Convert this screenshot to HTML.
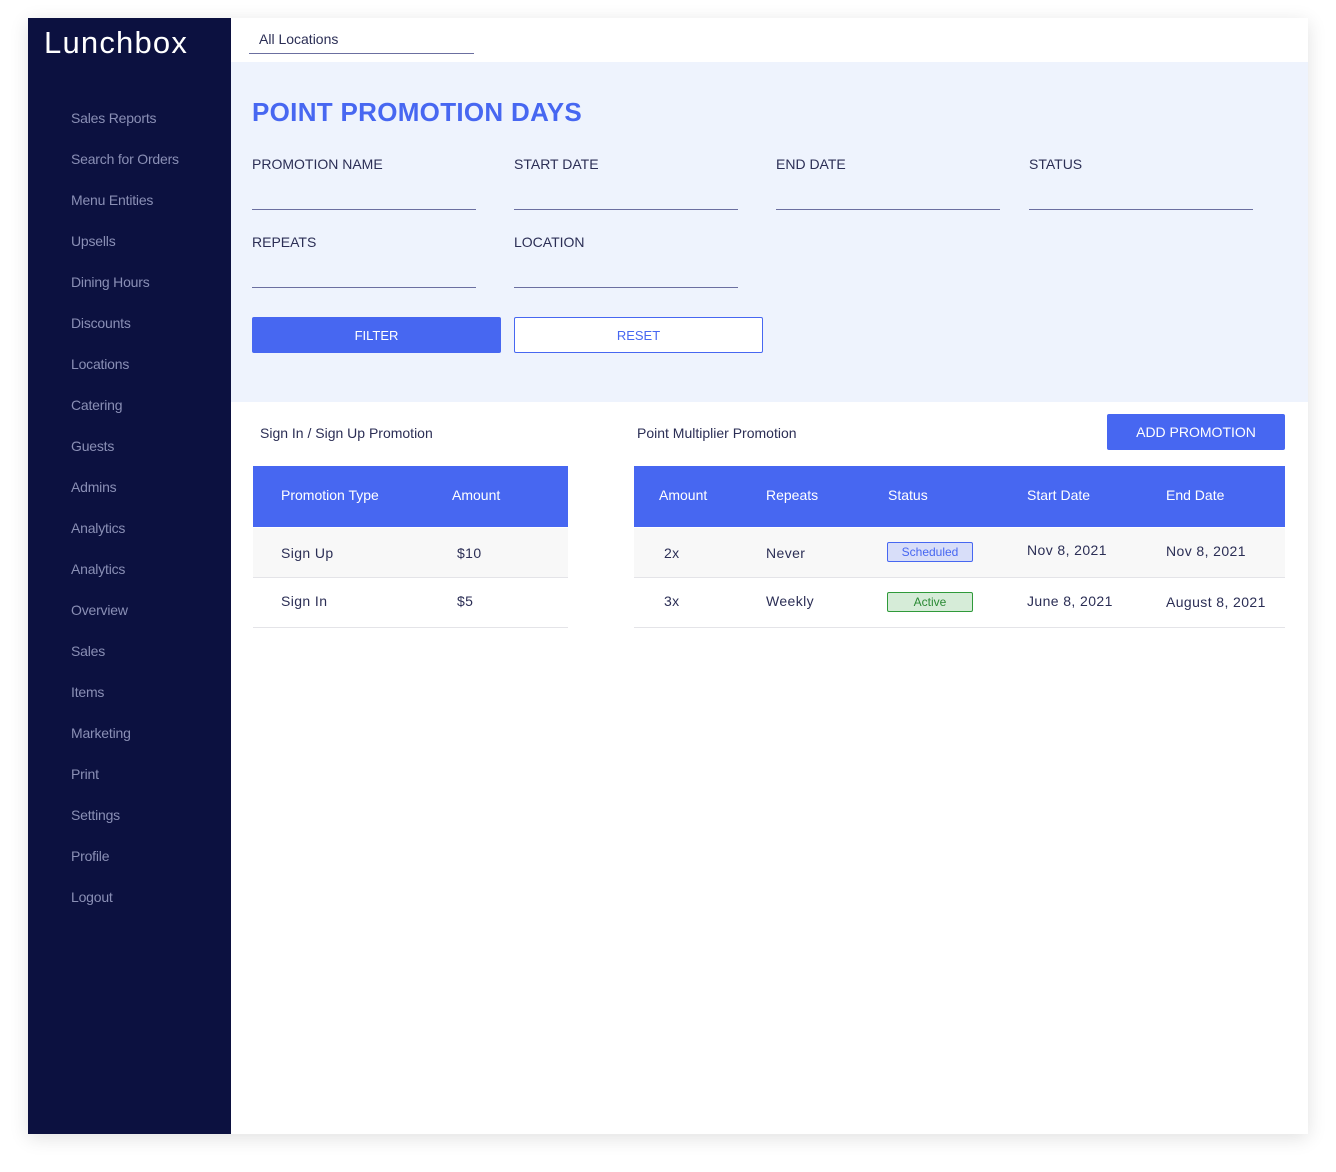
<!DOCTYPE html>
<html><head><meta charset="utf-8"><style>
*{margin:0;padding:0;box-sizing:border-box}
body{width:1336px;height:1172px;background:#fff;font-family:"Liberation Sans",sans-serif;position:relative;overflow:hidden;color:#2b2e55}
.card{position:absolute;left:28px;top:18px;width:1280px;height:1116px;background:#fff;box-shadow:0 4px 18px rgba(0,0,0,.12)}
.side{position:absolute;left:28px;top:18px;width:203px;height:1116px;background:#0c1140}
.logo{position:absolute;left:44px;top:25px;color:#fff;font-size:31px;letter-spacing:1.2px}
.nav{position:absolute;left:71px;color:#8a8fb5;font-size:14px;letter-spacing:-.2px}
.a{position:absolute}
.loc{left:249px;top:31px;width:225px;height:23px;border-bottom:1px solid #6b6fa0;font-size:14px;padding-left:10px;color:#2b2e55}
.filt{left:231px;top:62px;width:1077px;height:340px;background:#eef3fd}
h1{position:absolute;left:252px;top:97px;font-size:26px;color:#4767f1;font-weight:bold;letter-spacing:0.3px}
.lbl{position:absolute;font-size:14px;color:#2b2e55}
.ln{position:absolute;width:224px;height:1px;background:#6b6fa0}
.btn{position:absolute;height:36px;font-size:13px;display:flex;align-items:center;justify-content:center;border-radius:2px}
.th{position:absolute;background:#4767f1;height:61px;top:466px}
.th span{position:absolute;color:#fff;font-size:14px;top:21px}
.row{position:absolute;height:50px;border-bottom:1px solid #e4e4e8}
.row span{position:absolute;font-size:14px;letter-spacing:.4px}
.badge{position:absolute;width:86px;height:20px;font-size:12px;display:flex;align-items:center;justify-content:center;border-radius:2px;letter-spacing:0!important}
</style></head><body>
<div class="card"></div>
<div class="side"></div>
<div class="logo">Lunchbox</div>
<div class="nav" style="top:110px">Sales Reports</div>
<div class="nav" style="top:151px">Search for Orders</div>
<div class="nav" style="top:192px">Menu Entities</div>
<div class="nav" style="top:233px">Upsells</div>
<div class="nav" style="top:274px">Dining Hours</div>
<div class="nav" style="top:315px">Discounts</div>
<div class="nav" style="top:356px">Locations</div>
<div class="nav" style="top:397px">Catering</div>
<div class="nav" style="top:438px">Guests</div>
<div class="nav" style="top:479px">Admins</div>
<div class="nav" style="top:520px">Analytics</div>
<div class="nav" style="top:561px">Analytics</div>
<div class="nav" style="top:602px">Overview</div>
<div class="nav" style="top:643px">Sales</div>
<div class="nav" style="top:684px">Items</div>
<div class="nav" style="top:725px">Marketing</div>
<div class="nav" style="top:766px">Print</div>
<div class="nav" style="top:807px">Settings</div>
<div class="nav" style="top:848px">Profile</div>
<div class="nav" style="top:889px">Logout</div>

<div class="a loc">All Locations</div>
<div class="a filt"></div>
<h1>POINT PROMOTION DAYS</h1>
<div class="lbl" style="left:252px;top:156px">PROMOTION NAME</div>
<div class="lbl" style="left:514px;top:156px">START DATE</div>
<div class="lbl" style="left:776px;top:156px">END DATE</div>
<div class="lbl" style="left:1029px;top:156px">STATUS</div>
<div class="ln" style="left:252px;top:209px"></div>
<div class="ln" style="left:514px;top:209px"></div>
<div class="ln" style="left:776px;top:209px"></div>
<div class="ln" style="left:1029px;top:209px"></div>
<div class="lbl" style="left:252px;top:234px">REPEATS</div>
<div class="lbl" style="left:514px;top:234px">LOCATION</div>
<div class="ln" style="left:252px;top:287px"></div>
<div class="ln" style="left:514px;top:287px"></div>
<div class="btn" style="left:252px;top:317px;width:249px;background:#4767f1;color:#fff">FILTER</div>
<div class="btn" style="left:514px;top:317px;width:249px;border:1px solid #4767f1;color:#4767f1;background:#fff">RESET</div>

<div class="lbl" style="left:260px;top:425px">Sign In / Sign Up Promotion</div>
<div class="lbl" style="left:637px;top:425px">Point Multiplier Promotion</div>
<div class="btn" style="left:1107px;top:414px;width:178px;background:#4767f1;color:#fff;font-size:14px">ADD PROMOTION</div>

<div class="th" style="left:253px;width:315px"><span style="left:28px">Promotion Type</span><span style="left:199px">Amount</span></div>
<div class="row" style="left:253px;top:528px;width:315px;background:#f8f8f8"><span style="left:28px;top:17px">Sign Up</span><span style="left:204px;top:17px">$10</span></div>
<div class="row" style="left:253px;top:578px;width:315px"><span style="left:28px;top:15px">Sign In</span><span style="left:204px;top:15px">$5</span></div>

<div class="th" style="left:634px;width:651px"><span style="left:25px">Amount</span><span style="left:132px">Repeats</span><span style="left:254px">Status</span><span style="left:393px">Start Date</span><span style="left:532px">End Date</span></div>
<div class="row" style="left:634px;top:528px;width:651px;background:#f8f8f8"><span style="left:30px;top:17px">2x</span><span style="left:132px;top:17px">Never</span><div class="badge" style="left:253px;top:14px;background:#d8def9;border:1px solid #4767f1;color:#4767f1">Scheduled</div><span style="left:393px;top:14px">Nov 8, 2021</span><span style="left:532px;top:15px">Nov 8, 2021</span></div>
<div class="row" style="left:634px;top:578px;width:651px"><span style="left:30px;top:15px">3x</span><span style="left:132px;top:15px">Weekly</span><div class="badge" style="left:253px;top:14px;background:#d6ecd8;border:1px solid #2f9a3a;color:#2a8a34">Active</div><span style="left:393px;top:15px">June 8, 2021</span><span style="left:532px;top:16px">August 8, 2021</span></div>
</body></html>
